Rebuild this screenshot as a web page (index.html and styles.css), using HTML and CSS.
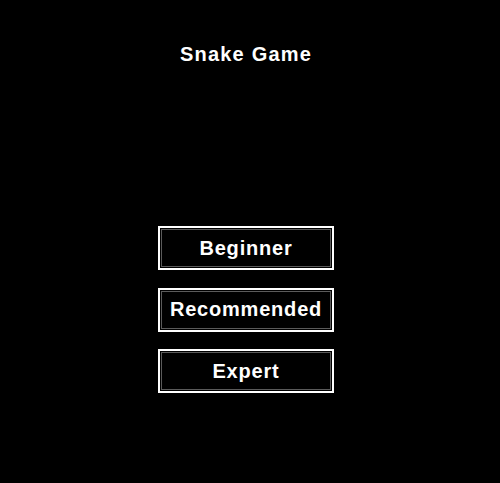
FILE: index.html
```html
<!DOCTYPE html>
<html lang="en">
  <head>
    <meta charset="UTF-8" />
    <meta name="viewport" content="width=device-width, initial-scale=1.0" />
    <title>Snake Game</title>
    <link rel="stylesheet" href="styles.css">
  </head>
  <body>
    <div class="screen">
      <h1 class="title">Snake Game</h1>
      <div class="menu">
        <button class="level">Beginner</button>
        <button class="level">Recommended</button>
        <button class="level">Expert</button>
      </div>
    </div>
  </body>
</html>
```

FILE: styles.css
```css
html,
body {
  margin: 0;
  height: 100%;
  background: #000;
}
body {
  font-family: "Liberation Sans", Arial, sans-serif;
  color: #fff;
  overflow: hidden;
}
.screen {
  width: 492px;
  display: flex;
  flex-direction: column;
  align-items: center;
  padding-top: 42px;
}
.title {
  margin: 0;
  font-size: 20px;
  line-height: 24px;
  font-weight: bold;
  letter-spacing: 1.2px;
}
.menu {
  margin-top: 160px;
  display: flex;
  flex-direction: column;
  gap: 17.5px;
}
.level {
  width: 176px;
  height: 44px;
  padding: 0;
  background: #000;
  color: #fff;
  border: 2px solid #fff;
  /* thin grey rule just inside the white frame */
  box-shadow: inset 0 0 0 1px #000, inset 0 0 0 2px #5a5a5a;
  font-family: inherit;
  font-size: 20px;
  font-weight: bold;
  letter-spacing: 0.8px;
  cursor: pointer;
}
```
